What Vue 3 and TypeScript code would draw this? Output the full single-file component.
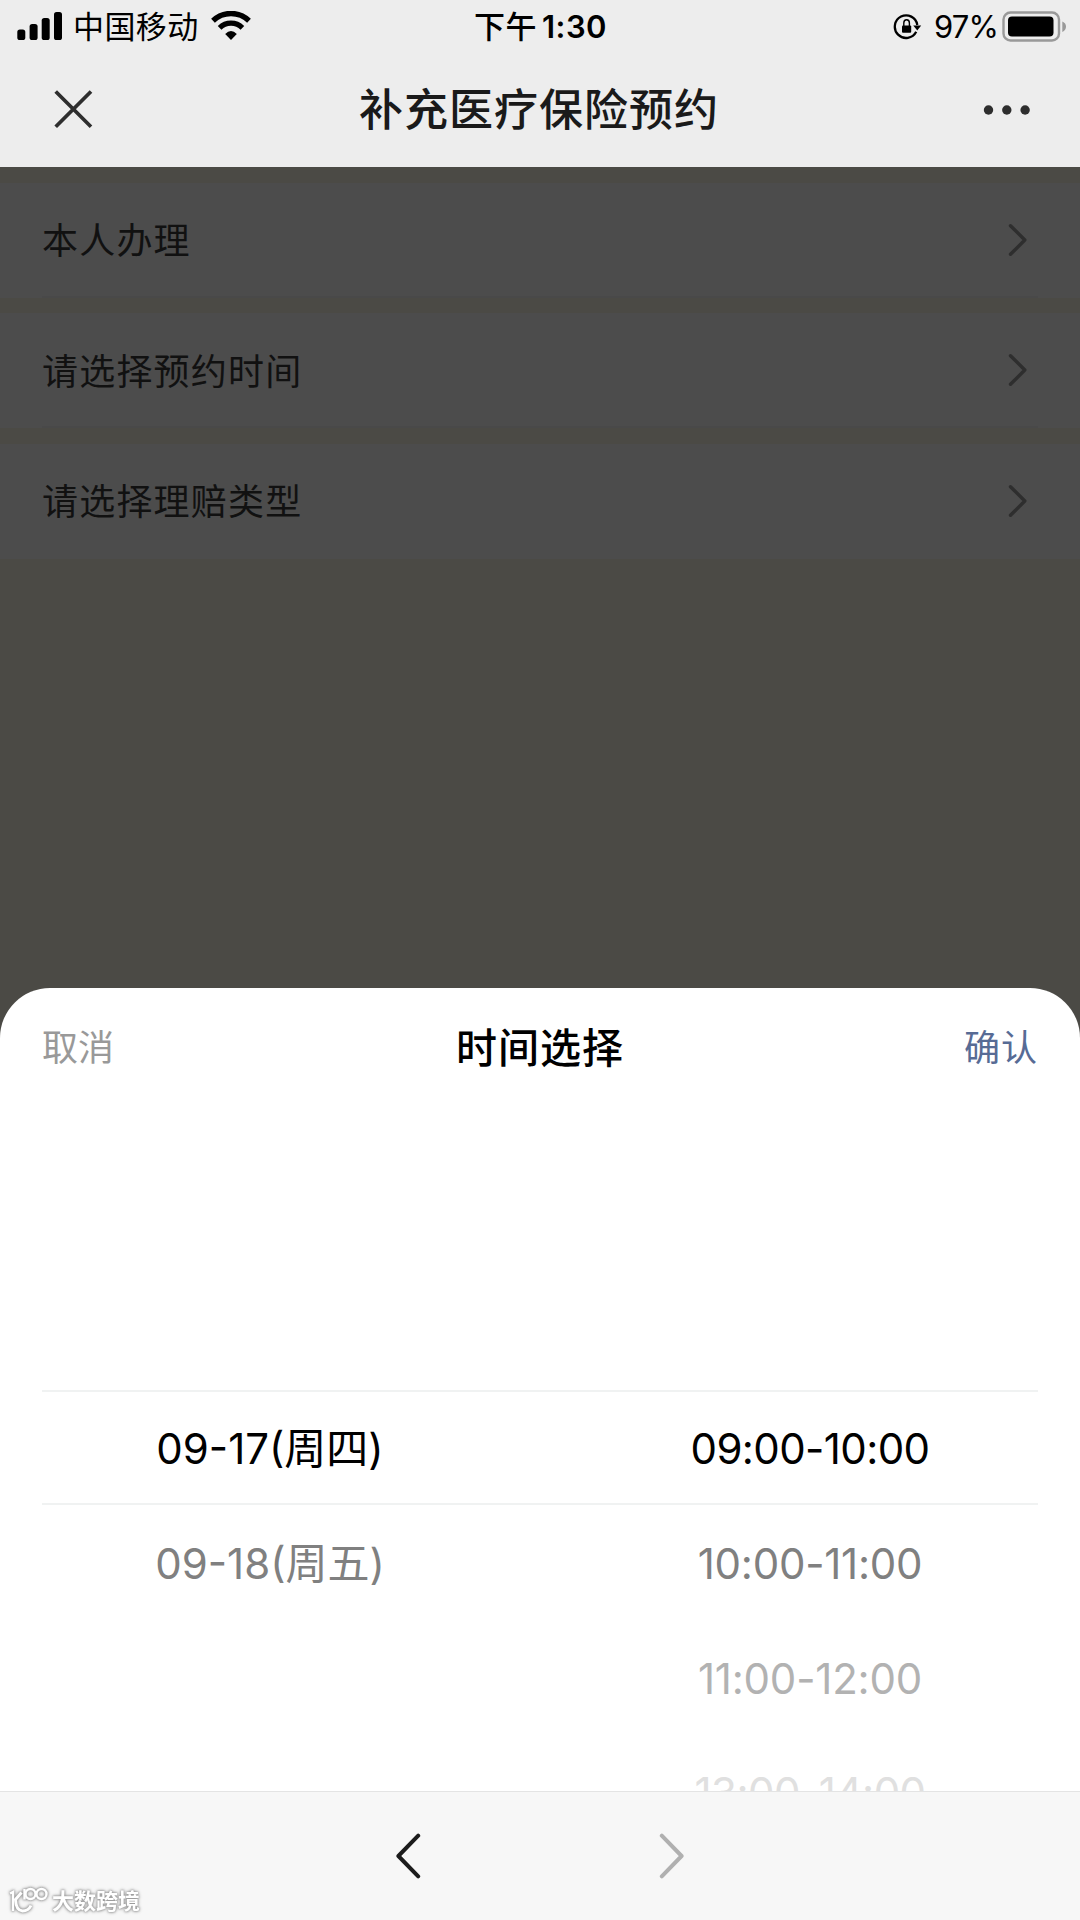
<script setup lang="ts">
interface PickerItem {
  label: string
  color: string
  spacing: string
}

const rows: string[] = ['本人办理', '请选择预约时间', '请选择理赔类型']

const dates: PickerItem[] = [
  { label: '09-17(周四)', color: '#000000', spacing: '0px' },
  { label: '09-18(周五)', color: '#808080', spacing: '0px' },
]

const times: PickerItem[] = [
  { label: '09:00-10:00', color: '#000000', spacing: '-0.6px' },
  { label: '10:00-11:00', color: '#808080', spacing: '-0.25px' },
  { label: '11:00-12:00', color: '#b2b2b2', spacing: '-0.2px' },
  { label: '13:00-14:00', color: '#e0e0e0', spacing: '-0.5px' },
]
</script>

<template>
  <div class="screen">
    <header class="top">
      <div class="status">
        <div class="status-side">
          <svg class="signal" width="46" height="30" viewBox="0 0 46 30">
            <rect x="0.3" y="18.5" width="8" height="10.5" rx="2.6" />
            <rect x="12.6" y="13" width="8" height="16" rx="2.6" />
            <rect x="24.7" y="7" width="8" height="22" rx="2.6" />
            <rect x="37" y="1" width="8" height="28" rx="2.6" />
          </svg>
          <span class="carrier">中国移动</span>
          <svg class="wifi" width="40" height="30" viewBox="0 0 40 30" fill="none" stroke="#000">
            <path d="M2 9.7 A26 26 0 0 1 38 9.7" stroke-width="5.4" />
            <path d="M8.6 16.9 A16.2 16.2 0 0 1 31.4 16.9" stroke-width="5.2" />
            <path d="M14.2 23 Q20 17.2 25.8 23 L20 29 Z" fill="#000" stroke="none" />
          </svg>
        </div>
        <div class="clock"><span class="ampm">下午</span><span class="time">1:30</span></div>
        <div class="status-side right">
          <svg class="lock" width="30" height="28" viewBox="0 0 30 28">
            <path d="M23.2 18.8 A11.3 11.3 0 1 1 24.3 12" fill="none" stroke="#000" stroke-width="2.3" />
            <path d="M20.2 12.4 H28.2 L24.3 17.4 Z" />
            <rect x="9" y="12.5" width="9.2" height="7.2" rx="1" />
            <path d="M10.8 13 V10 A2.8 3.2 0 0 1 16.4 10 V13" fill="none" stroke="#000" stroke-width="1.4" />
          </svg>
          <span class="percent">97%</span>
          <svg class="battery" width="66" height="32" viewBox="0 0 66 32">
            <rect x="1.5" y="1.5" width="55.5" height="28" rx="7" fill="none" stroke="#999" stroke-width="2.4" />
            <rect x="6" y="5.5" width="45.5" height="20" rx="4" />
            <path d="M60.3 10.5 Q64 12 64 15.5 Q64 19.3 60.3 21 Z" fill="#999" />
          </svg>
        </div>
      </div>
      <div class="nav">
        <svg class="close" width="40" height="40" viewBox="0 0 40 40">
          <path d="M2.7 2.5 L38 37.8 M38 2.5 L2.7 37.8" stroke="#2e2e2e" stroke-width="3.7" />
        </svg>
        <h1>补充医疗保险预约</h1>
        <svg class="more" width="48" height="12" viewBox="0 0 48 12" fill="#2e2e2e">
          <circle cx="5.5" cy="6" r="4.7" />
          <circle cx="23.8" cy="6" r="4.7" />
          <circle cx="42.1" cy="6" r="4.7" />
        </svg>
      </div>
    </header>

    <main class="page">
      <div v-for="row in rows" :key="row" class="row">
        <div class="row-inner">
          <span>{{ row }}</span>
          <svg width="20" height="36" viewBox="0 0 20 36">
            <path d="M2.5 3.7 L16.8 18 L2.5 32.3" />
          </svg>
        </div>
      </div>
    </main>

    <section class="sheet">
      <div class="sheet-head">
        <span class="cancel">取消</span>
        <h2>时间选择</h2>
        <span class="confirm">确认</span>
      </div>
      <div class="picker">
        <div class="indicator"></div>
        <ul class="column">
          <li v-for="d in dates" :key="d.label" :style="{ color: d.color, letterSpacing: d.spacing }">{{ d.label }}</li>
        </ul>
        <ul class="column">
          <li v-for="t in times" :key="t.label" :style="{ color: t.color, letterSpacing: t.spacing }">{{ t.label }}</li>
        </ul>
      </div>
    </section>

    <footer class="toolbar">
      <svg width="26" height="46" viewBox="0 0 26 46">
        <path d="M23.2 2.7 L3.4 23 L23.2 43.3" stroke="#1c1c1c" />
      </svg>
      <svg width="26" height="46" viewBox="0 0 26 46">
        <path d="M2.8 2.7 L22.6 23 L2.8 43.3" stroke="#b0b0b0" />
      </svg>
      <div class="mark">
        <svg width="43" height="30" viewBox="0 0 43 30" fill="none" stroke="#fff" stroke-width="2.4">
          <path d="M2 7.5 L5 6 V25" />
          <path d="M13.5 6.5 L7.5 13.5 Q8 24.5 14.5 25 Q20.5 25 23 19.5" stroke-width="3" />
          <path d="M16.5 3 V13.5" />
          <circle cx="22.5" cy="8" r="5" />
          <circle cx="33.5" cy="8" r="5" />
        </svg>
        <span>大数跨境</span>
      </div>
    </footer>
  </div>
</template>

<style>
body {
  margin: 0;
}
</style>

<style scoped>
.screen {
  width: 1080px;
  height: 1920px;
  display: flex;
  flex-direction: column;
  background: #4b4a45;
  overflow: hidden;
  font-family: Inter, "Noto Sans CJK SC", sans-serif;
}
.top {
  height: 167px;
  flex: none;
  background: #ededed;
}
.status {
  height: 54px;
  display: grid;
  grid-template-columns: 1fr auto 1fr;
  align-items: center;
  padding: 0 12px 0 17px;
}
.status-side {
  display: flex;
  align-items: center;
}
.right {
  justify-content: flex-end;
}
.signal {
  margin-top: -2px;
}
.carrier {
  font-size: 31px;
  line-height: 54px;
  margin-left: 10px;
  letter-spacing: 0.4px;
}
.wifi {
  margin: -3px 0 0 12px;
}
.clock {
  display: flex;
  align-items: center;
  line-height: 54px;
  letter-spacing: 0.5px;
  margin-right: 4px;
}
.ampm {
  font-size: 31px;
  font-weight: 500;
}
.time {
  font-size: 31px;
  font-weight: 600;
  margin-left: 5px;
}
.percent {
  font-size: 31px;
  line-height: 54px;
  margin: 0 4px 0 11px;
  letter-spacing: -0.9px;
}
.nav {
  height: 113px;
  display: flex;
  align-items: center;
  justify-content: space-between;
  padding: 0 49px 0 53px;
}
.close {
  margin-top: -3px;
}
.more {
  margin-top: -2px;
}
.nav h1 {
  margin: -1px 0 0 2px;
  font-size: 44px;
  line-height: 60px;
  font-weight: 500;
  letter-spacing: 1px;
  color: #1a1a1a;
}
.page {
  height: 821px;
  flex: none;
  box-sizing: border-box;
  padding-top: 15.5px;
  display: flex;
  flex-direction: column;
  gap: 15.5px;
}
.row {
  height: 115px;
  background: #4c4c4c;
  padding: 0 42px;
}
.row-inner {
  height: 115px;
  box-sizing: border-box;
  border-bottom: 2px solid #494949;
  display: flex;
  align-items: center;
  justify-content: space-between;
  padding-right: 10px;
  font-size: 36px;
  letter-spacing: 1.2px;
  color: #111;
}
.row-inner span {
  margin-bottom: 2px;
}
.row-inner svg {
  margin-top: 1px;
}
.row-inner path {
  fill: none;
  stroke: #2e2e2e;
  stroke-width: 3.4;
  stroke-linecap: round;
  stroke-linejoin: round;
}
.row:last-child .row-inner {
  border-bottom-color: transparent;
}
.sheet {
  height: 803px;
  flex: none;
  background: #fff;
  border-radius: 50px 50px 0 0;
  overflow: hidden;
}
.sheet-head {
  height: 114px;
  display: grid;
  grid-template-columns: 1fr auto 1fr;
  align-items: center;
  padding: 0 42px;
  font-size: 36px;
}
.sheet-head h2 {
  margin: 0;
  font-size: 41px;
  font-weight: 500;
  letter-spacing: 1px;
  color: #000;
}
.cancel {
  color: #999;
}
.confirm {
  color: #576b95;
  text-align: right;
  letter-spacing: 1px;
}
.picker {
  position: relative;
  height: 689px;
  box-sizing: border-box;
  padding-top: 289px;
  display: flex;
}
.indicator {
  position: absolute;
  left: 42px;
  right: 42px;
  top: 288px;
  height: 111px;
  border-top: 2px solid #f0f2f2;
  border-bottom: 2px solid #f0f2f2;
}
.column {
  position: relative;
  flex: 1;
  margin: 0;
  padding: 0;
  list-style: none;
  text-align: center;
  font-size: 42px;
}
.column li {
  height: 114.8px;
  line-height: 115px;
}
.toolbar {
  position: relative;
  flex: 1;
  box-sizing: border-box;
  border-top: 1px solid #e4e4e4;
  background: #f7f7f7;
  display: flex;
  justify-content: center;
  align-items: center;
  gap: 238px;
}
.toolbar > svg path {
  fill: none;
  stroke-width: 4;
  stroke-linecap: round;
  stroke-linejoin: round;
}
.mark {
  position: absolute;
  left: 8px;
  bottom: 4px;
  display: flex;
  align-items: center;
  color: #fff;
  font-size: 22px;
  line-height: 30px;
  font-weight: 700;
  filter: drop-shadow(0 0 1px #999) drop-shadow(0 0 1.5px #999);
}
.mark span {
  margin-left: 1px;
}
</style>
